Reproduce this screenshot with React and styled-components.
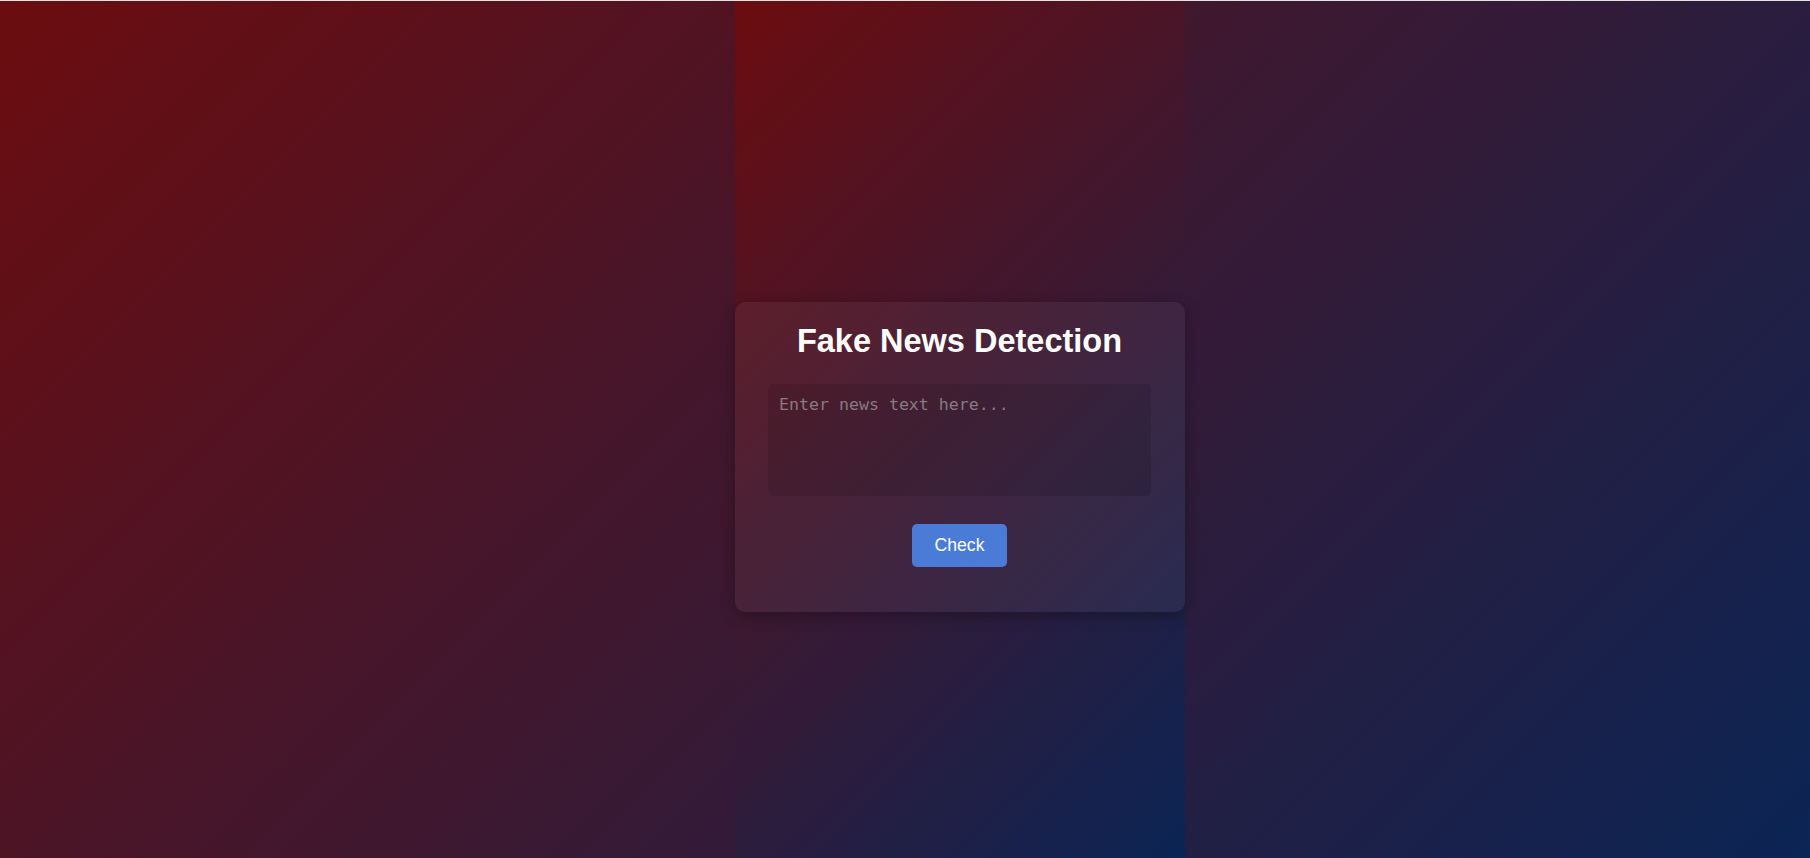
import React from 'react'
import styled, { createGlobalStyle } from 'styled-components'

const bg = 'linear-gradient(135deg, #6b0c0f 0%, #0b2555 100%)'

const Global = createGlobalStyle`
html {
  background: #e4e4e4;
}
body {
  margin: 1px 0 0 0;
  min-height: calc(100vh - 1px);
  background: ${bg};
  font-family: "Liberation Sans", Arial, sans-serif;
  display: flex;
  justify-content: center;
}
#root {
  display: flex;
}
`

const Column = styled.div`
width: 450px;
margin-left: 110px;
min-height: calc(100vh - 1px);
background: ${bg};
display: flex;
flex-direction: column;
justify-content: center;
padding-top: 55px;
box-sizing: border-box;
`

const Card = styled.div`
background: rgba(255, 255, 255, 0.05);
border-radius: 10px;
box-shadow: 0 4px 15px rgba(0, 0, 0, 0.3);
padding: 21px 34px 45px 33px;
display: flex;
flex-direction: column;
align-items: center;
`

const Title = styled.h1`
margin: 0 0 24px;
color: #ffffff;
font-size: 32.5px;
font-weight: bold;
line-height: 37px;
`

const Input = styled.textarea`
width: 100%;
height: 112px;
box-sizing: border-box;
padding: 11px 11px;
margin: 0 0 28px;
border: none;
border-radius: 5px;
resize: none;
background: rgba(0, 0, 0, 0.1);
color: #ffffff;
font-family: "DejaVu Sans Mono", monospace;
font-size: 16.6px;
outline: none;

&::placeholder {
  color: #877b80;
}
`

const Button = styled.button`
background: #4a7bd6;
color: #ffffff;
border: none;
border-radius: 5px;
padding: 0 23px;
height: 43px;
font-family: "Liberation Sans", Arial, sans-serif;
font-size: 17.6px;
cursor: pointer;
`

const App = () => (
  <>
    <Global />
    <Column>
      <Card>
        <Title>Fake News Detection</Title>
        <Input placeholder="Enter news text here..." />
        <Button>Check</Button>
      </Card>
    </Column>
  </>
)

export default App
